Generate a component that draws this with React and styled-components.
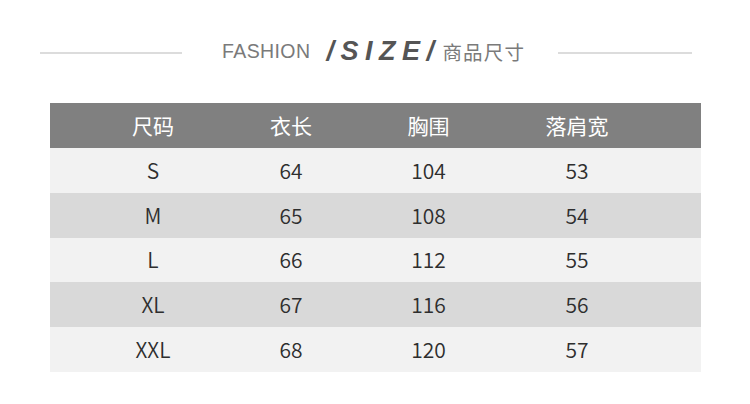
import React from "react";
import styled, { createGlobalStyle } from "styled-components";

const GlobalStyle = createGlobalStyle`
  html, body {
    margin: 0;
    padding: 0;
    background: #ffffff;
  }
  body {
    font-family: "Noto Sans CJK SC", "Noto Sans", sans-serif;
  }
`;

const Page = styled.div`
  width: 750px;
  height: 404px;
  background: #ffffff;
`;

const TitleBar = styled.div`
  display: flex;
  align-items: center;
  height: 103px;
  padding-left: 40px;
`;

const Rule = styled.div`
  width: ${(p) => p.$w}px;
  height: 2px;
  margin-top: 3px;
  background: #dcdcdc;
`;

const Title = styled.div`
  display: flex;
  align-items: center;
  margin: 0 ${(p) => p.$right}px 0 ${(p) => p.$left}px;
`;

const Fashion = styled.span`
  font-family: "Liberation Sans", Arial, sans-serif;
  font-size: 19.5px;
  color: #7a7a7a;
  letter-spacing: 0.4px;
`;

const Size = styled.span`
  font-family: "Liberation Sans", Arial, sans-serif;
  font-size: 27px;
  font-weight: bold;
  font-style: italic;
  color: #555555;
  letter-spacing: 6.5px;
  margin-left: 16px;
  margin-right: 2px;
`;

const Cn = styled.span`
  font-family: "Noto Sans CJK SC", sans-serif;
  font-size: 19.5px;
  color: #7a7a7a;
  letter-spacing: 1.2px;
`;

const Table = styled.div`
  margin-left: 50px;
  width: 651px;
`;

const Row = styled.div`
  display: grid;
  grid-template-columns: 138px 138px 137px 160px;
  padding-left: 34px;
  height: ${(p) => (p.$head ? 45 : 44.8)}px;
  align-items: center;
  background: ${(p) => p.$bg};
  color: ${(p) => (p.$head ? "#ffffff" : "#2e2e2e")};
  font-size: 21px;
  font-weight: ${(p) => (p.$head ? 400 : 350)};
`;

const Cell = styled.div`
  text-align: center;
  line-height: 1;
`;

const head = ["尺码", "衣长", "胸围", "落肩宽"];
const rows = [
  ["S", "64", "104", "53"],
  ["M", "65", "108", "54"],
  ["L", "66", "112", "55"],
  ["XL", "67", "116", "56"],
  ["XXL", "68", "120", "57"],
];

export default function App() {
  return (
    <Page>
      <GlobalStyle />
      <TitleBar>
        <Rule $w={142} />
        <Title $left={40} $right={33}>
          <Fashion>FASHION</Fashion>
          <Size>/SIZE/</Size>
          <Cn>商品尺寸</Cn>
        </Title>
        <Rule $w={134} />
      </TitleBar>
      <Table>
        <Row $head $bg="#808080">
          {head.map((h) => (
            <Cell key={h}>{h}</Cell>
          ))}
        </Row>
        {rows.map((r, i) => (
          <Row key={r[0]} $bg={i % 2 === 0 ? "#f2f2f2" : "#d9d9d9"}>
            {r.map((c, j) => (
              <Cell key={j}>{c}</Cell>
            ))}
          </Row>
        ))}
      </Table>
    </Page>
  );
}
